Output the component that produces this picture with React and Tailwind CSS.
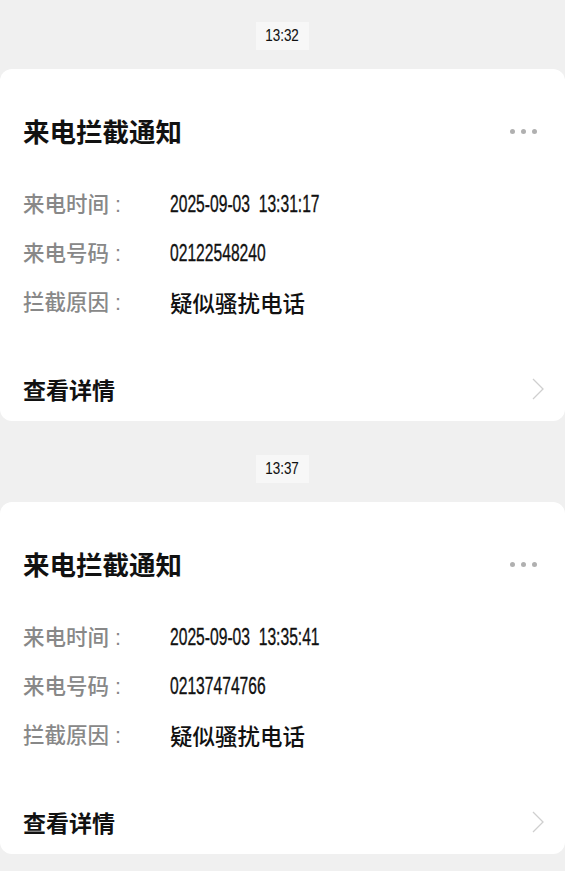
const notices = [
  { time: "13:32", at: "2025-09-03  13:31:17", number: "02122548240", reason: "疑似骚扰电话" },
  { time: "13:37", at: "2025-09-03  13:35:41", number: "02137474766", reason: "疑似骚扰电话" },
];

const cjk = { fontFamily: '"Noto Sans CJK SC", "Noto Sans", sans-serif' };
const latin = { fontFamily: '"Liberation Sans", "Noto Sans CJK SC", sans-serif' };

// digits in the reference are a tall condensed face; squeeze Liberation Sans
function Digits({ children, className }) {
  return (
    <span className={`inline-block whitespace-pre ${className}`} style={latin}>
      {children}
    </span>
  );
}

function Row({ label, value }) {
  const ascii = /^[\x00-\x7f]+$/.test(value);
  return (
    <div className="flex h-[49px] items-center">
      <span className="w-[147px] text-[21.5px] font-medium text-[#888]" style={cjk}>
        {label}
        <span className="ml-[6px]" style={latin}>:</span>
      </span>
      {ascii ? (
        <Digits className="origin-left scale-x-[0.68] text-[23px] text-[#111] [-webkit-text-stroke:0.35px_#111]">{value}</Digits>
      ) : (
        <span className="text-[22.5px] font-medium text-[#111]" style={cjk}>
          {value}
        </span>
      )}
    </div>
  );
}

function Notice({ item, first }) {
  return (
    <>
      <div className={`flex justify-center pb-[19px] ${first ? "pt-[22px]" : "pt-[34px]"}`}>
        <div className="flex h-[28px] w-[53px] items-center justify-center bg-[#f7f7f7]">
          <Digits className="origin-center scale-x-[0.84] text-[16px] text-[#111] [-webkit-text-stroke:0.1px_#111]">{item.time}</Digits>
        </div>
      </div>
      <div className="h-[352px] rounded-[12px] bg-white pt-[46px] pl-[23px] pr-[21px]">
        <div className="flex h-[32px] items-center justify-between">
          <h2 className="text-[26.5px] font-bold text-[#111]" style={cjk}>
            来电拦截通知
          </h2>
          <div className="mr-[7px] flex gap-[6px]">
            <span className="h-[5px] w-[5px] rounded-full bg-[#b0b0b0]" />
            <span className="h-[5px] w-[5px] rounded-full bg-[#b0b0b0]" />
            <span className="h-[5px] w-[5px] rounded-full bg-[#b0b0b0]" />
          </div>
        </div>
        <div className="mt-[33px]">
          <Row label="来电时间" value={item.at} />
          <Row label="来电号码" value={item.number} />
          <Row label="拦截原因" value={item.reason} />
        </div>
        <div className="mt-[46px] flex h-[32px] items-center justify-between">
          <span className="text-[23px] font-bold text-[#111]" style={cjk}>
            查看详情
          </span>
          <svg width="12" height="22" viewBox="0 0 12 22" fill="none">
            <path d="M1 1l10 10L1 21" stroke="#cfcfcf" strokeWidth="1.3" />
          </svg>
        </div>
      </div>
    </>
  );
}

export default function App() {
  return (
    <div className="min-h-[871px] w-[565px] overflow-hidden bg-[#f0f0f0]">
      {notices.map((item, i) => (
        <Notice key={item.time} item={item} first={i === 0} />
      ))}
    </div>
  );
}
